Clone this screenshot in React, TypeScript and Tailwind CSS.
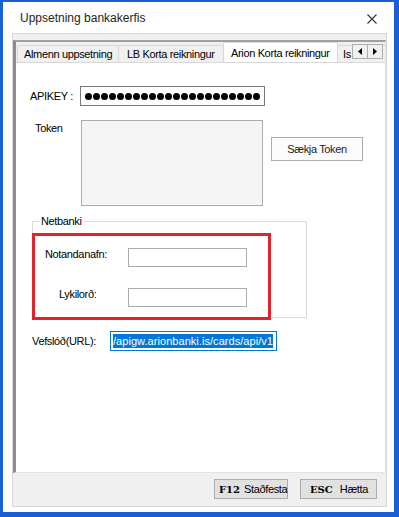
export default function App() {
  const dots = Array.from({ length: 22 });

  return (
    <div className="w-[399px] h-[517px] bg-white border-l-[3px] border-t-[2px] border-r-[5px] border-b-[5px] border-[#1b5fd6] flex flex-col font-['Liberation_Sans',Arial,sans-serif] text-[11px] leading-[13px] tracking-[-0.35px] text-black">
      {/* Title bar */}
      <div className="h-[31px] shrink-0 flex items-center justify-between pl-[17px] pr-[17px]">
        <span className="text-[12px] leading-[14px] tracking-normal text-[#1e1e1e]">Uppsetning bankakerfis</span>
        <svg width="10" height="10" viewBox="0 0 10 10" className="mt-[3px]">
          <path d="M0.5 0.5 L9.5 9.5 M9.5 0.5 L0.5 9.5" stroke="#333" strokeWidth="1.1" />
        </svg>
      </div>

      {/* Client panel */}
      <div className="ml-[9px] w-[375px] h-[474px] border border-[#d7d7d7] bg-[#f0f0f0] flex flex-col pt-[6px]">
        {/* Tab control frame */}
        <div className="h-[433px] shrink-0 flex flex-col border-t-2 border-l-[3px] border-r border-b border-t-[#a0a0a0] border-l-[#8c8c8c] border-r-[#e3e3e3] border-b-[#e3e3e3]">
          {/* Tab strip */}
          <div className="relative h-[21px] shrink-0 flex items-end pl-px border-b border-[#d9d9d9] whitespace-nowrap overflow-hidden">
            <div className="shrink-0 w-[101px] h-[17px] flex items-center pl-[6px] border-t border-l border-[#d9d9d9] bg-[#f0f0f0]">
              Almenn uppsetning
            </div>
            <div className="shrink-0 w-[105px] h-[17px] flex items-center pl-[8px] border-t border-l border-[#d9d9d9] bg-[#f0f0f0]">
              LB Korta reikningur
            </div>
            <div className="shrink-0 relative z-10 w-[115px] h-[21px] -mb-px flex items-center pl-[7px] border-t border-l border-r border-[#d9d9d9] bg-white">
              Arion Korta reikningur
            </div>
            <div className="flex-1 min-w-0 h-[17px] flex items-center pl-[5px] border-t border-[#d9d9d9] bg-[#f0f0f0]">
              Is
            </div>
            {/* Tab scroll arrows */}
            <div className="absolute right-[2px] top-[2px] flex z-20">
              <div className="w-[16px] h-[15px] flex items-center justify-center border border-[#adadad] bg-[#f0f0f0]">
                <svg width="4" height="7" viewBox="0 0 4 7">
                  <path d="M4 0 L0 3.5 L4 7 Z" fill="#000" />
                </svg>
              </div>
              <div className="w-[16px] h-[15px] -ml-px flex items-center justify-center border border-[#adadad] bg-[#f0f0f0]">
                <svg width="4" height="7" viewBox="0 0 4 7">
                  <path d="M0 0 L4 3.5 L0 7 Z" fill="#000" />
                </svg>
              </div>
            </div>
          </div>

          {/* Tab page */}
          <div className="flex-1 bg-white flex flex-col pl-[14px]">
            {/* APIKEY */}
            <div className="mt-[23px] flex items-center">
              <span className="w-[50px] shrink-0">APIKEY :</span>
              <div className="w-[185px] h-[20px] border border-[#7a7a7a] flex items-center gap-px pl-[4px]">
                {dots.map((_, i) => (
                  <span key={i} className="shrink-0 w-[7px] h-[7px] rounded-full bg-black" />
                ))}
              </div>
            </div>

            {/* Token */}
            <div className="mt-[14px] flex items-start">
              <span className="w-[46px] ml-[5px] pt-[2px] shrink-0">Token</span>
              <div className="w-[182px] h-[86px] border border-[#ababab] bg-[#f5f5f5]" />
              <button className="ml-[8px] mt-[17px] w-[92px] h-[24px] border border-[#adadad] bg-[#fcfcfc] text-[#1a1a1a] whitespace-nowrap">
                Sækja Token
              </button>
            </div>

            {/* Netbanki group */}
            <div className="relative mt-[15px] ml-[2px] w-[275px] h-[97px] border border-[#dcdcdc]">
              <span className="absolute -top-[7px] left-[7px] bg-white px-px">Netbanki</span>
              <div className="mt-[26px] flex items-start">
                <span className="w-[95px] shrink-0 pl-[12px]">Notandanafn:</span>
                <div className="w-[119px] h-[19px] border border-[#ababab]" />
              </div>
              <div className="mt-[21px] flex items-start">
                <span className="w-[95px] shrink-0 pl-[26px]">Lykilorð:</span>
                <div className="w-[119px] h-[19px] border border-[#ababab]" />
              </div>
              {/* red highlight */}
              <div className="absolute -left-px top-[11px] w-[239px] h-[87px] border-[3px] border-[#e3222a]" />
            </div>

            {/* URL */}
            <div className="mt-[13px] ml-[2px] flex items-center">
              <span className="w-[78px] shrink-0">Vefslóð(URL):</span>
              <div className="w-[167px] h-[20px] border border-[#0078d7] flex items-center px-[2px] overflow-hidden">
                <span className="bg-[#0078d7] text-white whitespace-nowrap leading-[14px] tracking-[0.05px]">
                  /apigw.arionbanki.is/cards/api/v1
                </span>
              </div>
            </div>
          </div>
        </div>

        {/* Bottom buttons */}
        <div className="mt-[6px] flex justify-end gap-[12px] pr-[9px]">
          <button className="w-[74px] h-[20px] border border-[#adadad] bg-[#e1e1e1] flex items-center pl-[4px] gap-[4px] whitespace-nowrap">
            <span className="font-['DejaVu_Serif',serif] font-bold text-[10px] tracking-normal">F12</span>
            <span>Staðfesta</span>
          </button>
          <button className="w-[77px] h-[20px] border border-[#adadad] bg-[#e1e1e1] flex items-center pl-[9px] gap-[7px] whitespace-nowrap">
            <span className="font-['DejaVu_Serif',serif] font-bold text-[10px] tracking-normal">ESC</span>
            <span>Hætta</span>
          </button>
        </div>
      </div>
    </div>
  );
}
